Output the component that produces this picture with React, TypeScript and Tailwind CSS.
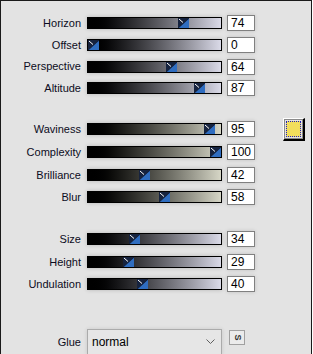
import React from "react";

type Row = { label: string; value: number };

const groupOne: Row[] = [
  { label: "Horizon", value: 74 },
  { label: "Offset", value: 0 },
  { label: "Perspective", value: 64 },
  { label: "Altitude", value: 87 },
];

const groupTwo: Row[] = [
  { label: "Waviness", value: 95 },
  { label: "Complexity", value: 100 },
  { label: "Brilliance", value: 42 },
  { label: "Blur", value: 58 },
];

const groupThree: Row[] = [
  { label: "Size", value: 34 },
  { label: "Height", value: 29 },
  { label: "Undulation", value: 40 },
];

const Thumb = ({ value }: { value: number }) => (
  <svg
    className="absolute top-0"
    style={{ left: (value / 100) * 122 }}
    width="11"
    height="10"
    viewBox="0 0 11 10"
  >
    <rect width="11" height="10" fill="#2b64b0" />
    <polygon points="0,0 11,0 11,1 1,10 0,10" fill="#16233f" />
    <polygon points="11,1 11,10 1,10" fill="#2f6dc0" />
    <line x1="1" y1="1" x2="5" y2="4.5" stroke="#ffffff" strokeWidth="1" />
  </svg>
);

const SliderRow = ({
  label,
  value,
  beige,
  extra,
  rowClass,
}: Row & { beige?: boolean; extra?: React.ReactNode; rowClass: string }) => (
  <div className={`flex items-center ${rowClass}`}>
    <div className="w-[80px] text-right text-[11px] text-[#0c0c22]">{label}</div>
    <div
      className={`relative ml-[6px] h-[12px] w-[135px] border border-black bg-gradient-to-r from-black shadow-[0_0_4px_rgba(0,0,0,0.2)] ${
        beige ? "to-[#d6d6c6]" : "to-[#dadae8]"
      }`}
    >
      <Thumb value={value} />
    </div>
    <div className="ml-[5px] flex h-[16px] w-[28px] items-center border border-[#808080] bg-white pl-[3px] text-[12px] leading-none text-black shadow-[0_0_4px_rgba(0,0,0,0.15)]">
      {value}
    </div>
    {extra}
  </div>
);

const ColorButton = () => (
  <div className="ml-[28px] h-[23px] w-[22px] border-t border-l border-b-2 border-r-2 border-t-white border-l-white border-b-black border-r-black">
    <div className="h-full w-full border border-[#8a8a8a] p-[1px]">
      <div className="h-full w-full border border-dotted border-[#2020c0] bg-[#f2de5c]" />
    </div>
  </div>
);

export default function App() {
  return (
    <div
      className="h-[354px] w-[312px] overflow-hidden border-t border-l border-r border-[#1a1a1a] bg-[#e3e3e3]"
      style={{ fontFamily: '"Liberation Sans", Arial, sans-serif' }}
    >
      <div className="pt-[11.5px]">
        {groupOne.map((r) => (
          <SliderRow key={r.label} {...r} rowClass="h-[21.67px]" />
        ))}
      </div>
      <div className="pt-[19px]">
        {groupTwo.map((r) => (
          <SliderRow
            key={r.label}
            {...r}
            beige
            rowClass="h-[22.67px]"
            extra={r.label === "Waviness" ? <ColorButton /> : null}
          />
        ))}
      </div>
      <div className="pt-[19.3px]">
        {groupThree.map((r) => (
          <SliderRow key={r.label} {...r} rowClass="h-[22.5px]" />
        ))}
      </div>
      <div className="mt-[33px] flex items-start">
        <div className="w-[80px] pt-[5px] text-right text-[11px] text-[#0c0c22]">Glue</div>
        <div className="ml-[6px] flex h-[26px] w-[135px] items-center justify-between border border-[#ababab] bg-[#e6e6e6] pl-[4px] pr-[6px] text-[12px] text-black shadow-[0_0_4px_rgba(0,0,0,0.12)]">
          <span>normal</span>
          <svg width="9" height="6" viewBox="0 0 9 6">
            <polyline points="0.5,0.5 4.5,4.5 8.5,0.5" fill="none" stroke="#606060" strokeWidth="1" />
          </svg>
        </div>
        <div className="ml-[7px] mt-[1px] flex h-[15px] w-[16px] items-center justify-center border border-[#a0a0a0] bg-[#ebebeb]">
          <span className="rotate-90 text-[9px] font-bold leading-none text-[#333]">S</span>
        </div>
      </div>
    </div>
  );
}
